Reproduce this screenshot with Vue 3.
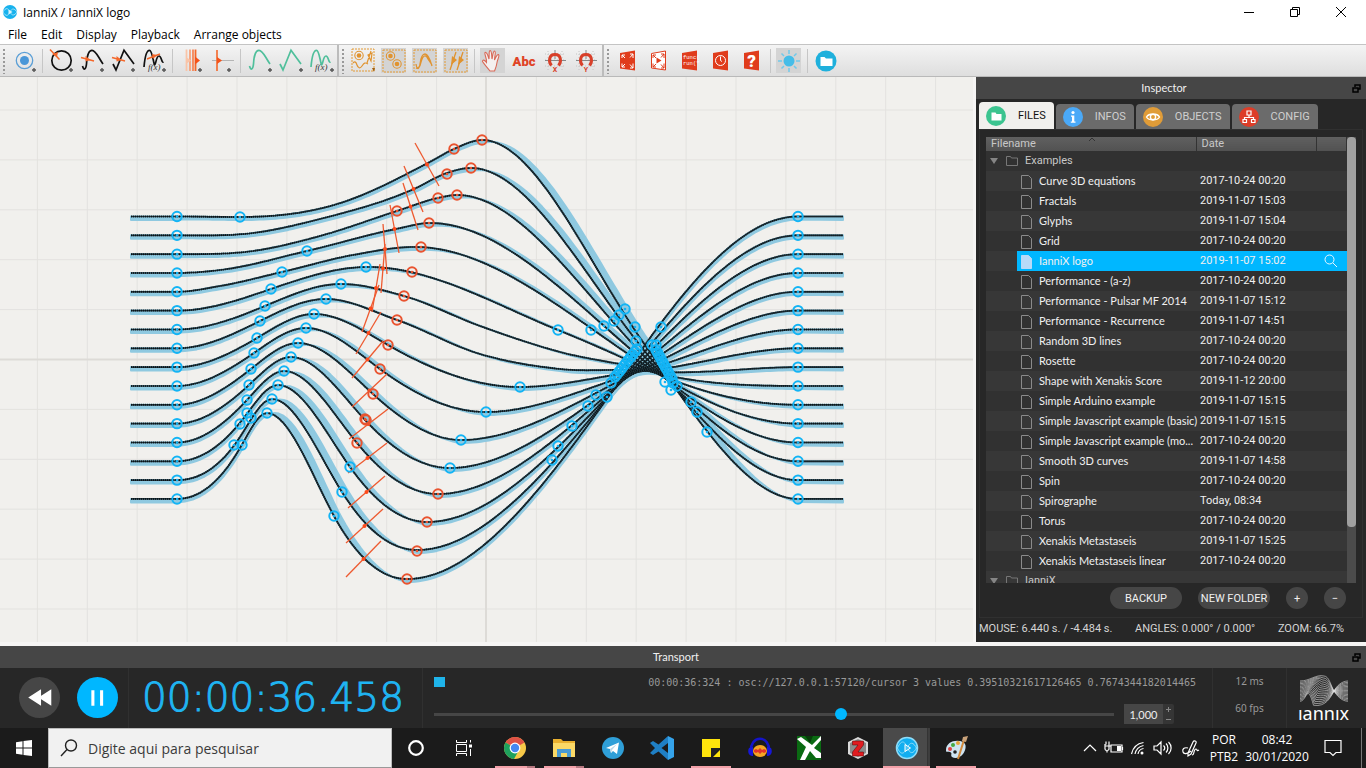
<script setup>
import { ref } from 'vue'

/* ---------- toolbar ---------- */
const plus = (x, y) => `<path d="M${x - 2} ${y}h4M${x} ${y - 2}v4" stroke="#555" stroke-width="1.4"/>`
const bump = 'M5.5 20C7 25.500 9 23 9.500 18C10 8 12 4.300 15 4.300C19 4.300 21 11 26 18'
const peak = 'M5 18L8 24L16 4.300L26 18'
const double = 'M5 21C6 9 8 4.300 10.500 4.300C13 4.300 13.500 12 15.500 19C17 19 17 10 20 10C22.500 10 22.500 17 24.500 16'
const fx = '<text x="9" y="24" font-size="9" font-style="italic" font-family="Liberation Serif, serif" fill="#333">f(x)</text>'
const line = (d, c) => `<path d="${d}" fill="none" stroke="${c}" stroke-width="1.7"/>`
const cursor = '<path d="M4 11.500L17 15" stroke="#f4672a" stroke-width="1.600"/><path d="M8.500 10l5 4-5 1.500z" fill="#f4672a"/>'
const frame = '<rect x="4" y="4" width="22" height="22" fill="none" stroke="#e39a35" stroke-width="1" stroke-dasharray="2 1"/>'
const dot = (x, y) => `<circle cx="${x}" cy="${y}" r="4.200" fill="none" stroke="#e0932f" stroke-width="1.100"/><circle cx="${x}" cy="${y}" r="2.300" fill="#e0932f"/>`
const magnet = (l) => `<path d="M5 8h20M5 14h20M5 20h20M8 5v20M22 5v20" stroke="#c4c4c4" stroke-width="1" stroke-dasharray="1 2"/><path d="M5 14.500h21M15 4v9" stroke="#888"/><path d="M11.500 19.500C8.500 16 8.500 8.500 15 8.500s6.500 7.500 3.500 11" fill="none" stroke="#d8402a" stroke-width="3"/><text x="15" y="25.500" text-anchor="middle" font-size="7" font-weight="bold" font-family="Roboto, sans-serif" fill="#d8402a">${l}</text>`
const panel = (inner) => `<path d="M7 7L22 4.500V24.500L7 22.500z" fill="#e03c1c"/>${inner}`
const expand = (c) => `<path d="M9 12V9h3M9 9l3 3M20 12V8h-3M20 8l-3 3.500M9 17.500V21h3M9 21l3-3M20 17.500V22h-3M20 22l-3-3.500" stroke="${c}" fill="none"/>`

const groups = [
  [
    { n: 'Add trigger', s: `<circle cx="15.500" cy="14.500" r="8.200" fill="none" stroke="#5b9fd6" stroke-width="1.300"/><circle cx="15.500" cy="14.500" r="4.500" fill="#4a97d8"/>${plus(25, 24)}` },
    null,
    { n: 'Circle curve', s: `<circle cx="15.500" cy="14.500" r="9.700" fill="none" stroke="#111" stroke-width="1.700"/><path d="M4 3.500L13.500 13.500" stroke="#f4672a" stroke-width="1.500"/><path d="M6 8l6-2-1 5z" fill="#f4672a"/>${plus(25, 24)}` },
    { n: 'Smooth curve', s: line(bump, '#111') + cursor + plus(25, 24) },
    { n: 'Straight curve', s: line(peak, '#111') + cursor + plus(25, 24) },
    { n: 'Equation curve', s: line(double, '#111') + '<path d="M8 13L21 8" stroke="#f4672a" stroke-width="1.500"/><path d="M13 8l5 1-4 4z" fill="#f4672a"/>' + fx + plus(25, 24) },
    null,
    { n: 'Timeline', s: `<path d="M10.500 3.500V25" stroke="#f9c4a8" stroke-width="1.800"/><path d="M14 3.500V25" stroke="#f7a27c" stroke-width="1.800"/><path d="M17 3.500V25" stroke="#f58657" stroke-width="1.800"/><path d="M19.500 3.500V25" stroke="#f4672a" stroke-width="1.800"/><path d="M19 10.500L24 14.500L19 18.500z" fill="#f4531a"/><path d="M10 11l5 3.500-5 3.500z" fill="#f9c4a8"/>${plus(24, 24)}` },
    { n: 'Cursor', s: `<path d="M5 14.500H27" stroke="#b5b5b5"/><path d="M10 4V25" stroke="#f4672a" stroke-width="1.600"/><path d="M10 11l5 3.500-5 3.500z" fill="#f4531a"/>${plus(22, 24)}` },
    null,
    { n: 'Smooth path', s: line(bump, '#4fbf9b') + plus(26, 24) },
    { n: 'Straight path', s: line(peak, '#4fbf9b') + plus(26, 24) },
    { n: 'Equation path', s: line(double, '#4fbf9b') + fx + plus(26, 24) }
  ],
  [
    { n: 'Show all', s: `<rect x="4" y="3" width="22" height="22" fill="none" stroke="#e39a35" stroke-dasharray="2 1"/>${dot(11, 9.5)}<path d="M5 17c2-2 3-1 4 2s3 4 5 1 3-4 6-2M19 17L23 5M20 9l4-2-1 8z" fill="none" stroke="#e0932f" stroke-width="1.200"/><path d="M24 22h3l-1 4z" fill="#a06010"/>` },
    { n: 'Show triggers', on: 1, s: frame + dot(11.5, 10) + dot(18, 18) },
    { n: 'Show curves', on: 1, s: frame + '<path d="M6 18c1 6 3 6 4 0 1-8 3-10 5-10s5 5 7 12M6 22c2 1 4-1 5-6 2-7 5-8 7-3l4 6" fill="none" stroke="#e0932f" stroke-width="1.300"/>' },
    { n: 'Show cursors', on: 1, s: frame + '<path d="M9 24L15 6M16 24L22 6" stroke="#e0932f" stroke-width="1.300"/><path d="M11 10l5 4-6 5zM18 10l5 4-6 5z" fill="#e0932f"/>' },
    null,
    { n: 'Move view', on: 1, s: '<path d="M12 25C9 21 6 18 4.500 15.500c0-2 2-2 4 1C9 12 6 8 7 6.500c1.500-1 3 3 4 6.500.500-4-.500-8 1-8.500 2 0 1.500 5 2 8.500 1-4 1-8 2.500-8 2 .500 0 5 0 9 1.500-3 2.500-6 4-5.500 1.500 1-1 5-1.500 8-.500 4-1 5-2.500 8.500z" fill="#f4f0ef" stroke="#d96a58" stroke-width="1.100"/>' },
    { n: 'Show labels', s: '<text x="15" y="19.500" text-anchor="middle" font-size="13" font-weight="900" font-family="Roboto, sans-serif" fill="#df4326">Abc</text>' },
    { n: 'Snap X', s: magnet('X') },
    { n: 'Snap Y', s: magnet('Y') }
  ],
  [
    { n: 'Fit window', s: panel(expand('#fff')) },
    { n: 'Full screen', s: '<path d="M7.500 7.500L21.500 5V24L7.500 22z" fill="#fff" stroke="#e03c1c"/><path d="M12.500 11.500l5 3-5 3z" fill="#e03c1c"/>' + expand('#e03c1c') },
    { n: 'Functions', s: panel('<g font-size="5.500" font-family="Liberation Mono, monospace" fill="#fff"><text x="8" y="13">func(</text><text x="8" y="19">run("</text></g>') },
    { n: 'Timing', s: panel('<circle cx="14.500" cy="14.500" r="5" fill="none" stroke="#fff"/><path d="M14.500 10.500v4l1.500 1" stroke="#fff" fill="none"/>') },
    { n: 'Help', s: panel('<text x="14.500" y="20.500" text-anchor="middle" font-size="17" font-weight="900" font-family="Roboto, sans-serif" fill="#fff">?</text>') },
    null,
    { n: 'Light theme', on: 1, s: '<circle cx="15" cy="15" r="5.500" fill="#45bde8"/><path d="M15 4v4M15 22v4M4 15h4M22 15h4M7.500 7.500l2.500 2.500M20 20l2.500 2.500M22.500 7.500L20 10M10 20l-2.500 2.500" stroke="#72c9ea" stroke-width="1.500"/>' },
    null,
    { n: 'Open project', s: '<circle cx="15" cy="15" r="10.500" fill="#1fb0dc"/><path d="M9.500 11h4l1.500 1.500h6.500V20h-12z" fill="#fff"/>' }
  ]
]

/* ---------- score ---------- */
const startY = (i) => 216.5 + 18.83 * i
/* [x, y, flat?] knots of every string, between the two straight ends */
const rise = [
  [[240, 217, 1], [334, 205], [428, 163], [454, 149], [482, 140, 1]],
  [[253, 233], [320, 219], [414, 189], [447, 173], [471, 168, 1]],
  [[253, 251], [320, 236], [397, 211], [438, 198], [457, 195, 1]],
  [[220, 270], [307, 251], [396, 229], [430, 223, 1]],
  [[220, 286], [282, 272], [353, 255], [415, 247, 1]],
  [[271, 289], [368, 267, 1]],
  [[265, 306], [341, 284, 1], [404, 296]],
  [[260, 321], [326, 299, 1], [397, 320]],
  [[257, 338], [314, 314, 1], [388, 345], [520, 387, 1]],
  [[254, 353], [306, 328, 1], [380, 369], [486, 412, 1]],
  [[251, 369], [298, 343, 1], [373, 394], [461, 440, 1]],
  [[249, 385], [291, 357, 1], [366, 421], [450, 468, 1]],
  [[247, 400], [284, 371, 1], [357, 443], [438, 494, 1]],
  [[243, 419], [278, 385, 1], [350, 467], [427, 522, 1]],
  [[240, 437], [272, 399, 1], [342, 492], [417, 550, 1]],
  [[240, 448], [267, 413, 1], [334, 516], [407, 579, 1]]
]
const middle = { 5: [[558, 330]], 6: [[480, 326], [560, 352]], 7: [[480, 354], [560, 369]] }

function build(i) {
  const t = (i - 7.5) / 7.5
  const r = 15 - i
  const pts = [
    [177, startY(i), 1], ...rise[i], ...(middle[i] || []),
    [645, 371 - 26 * t * t, 0, -1.4 * t],
    [798, startY(r), 1]
  ]
  const m = pts.map((p, k) => {
    if (p[2]) return 0
    if (p[3] !== undefined) return p[3]
    const a = pts[k - 1], b = pts[k + 1]
    const h1 = p[0] - a[0], h2 = b[0] - p[0]
    const s1 = (p[1] - a[1]) / h1, s2 = (b[1] - p[1]) / h2
    /* steeper tangent between two flat neighbours keeps the swing round */
    if (a[2] && b[2]) return 1.5 * (s1 * h2 + s2 * h1) / (h1 + h2)
    return (s1 * h2 + s2 * h1) / (h1 + h2)
  })
  const main = [[131, startY(i)], [177, startY(i)]]
  const edge = [[131, startY(i) + 3.5], [177, startY(i) + 3.5]]
  for (let k = 0; k < pts.length - 1; k++) {
    const [x0, y0] = pts[k], [x1, y1] = pts[k + 1], h = x1 - x0
    const n = Math.ceil(h / 4)
    for (let j = 1; j <= n; j++) {
      const u = j / n
      const y = (2 * u ** 3 - 3 * u ** 2 + 1) * y0 + (u ** 3 - 2 * u ** 2 + u) * h * m[k] +
        (3 * u ** 2 - 2 * u ** 3) * y1 + (u ** 3 - u ** 2) * h * m[k + 1]
      const slope = ((6 * u * u - 6 * u) * y0 + (6 * u - 6 * u * u) * y1) / h + (3 * u * u - 4 * u + 1) * m[k] + (3 * u * u - 2 * u) * m[k + 1]
      main.push([x0 + h * u, y])
      edge.push([x0 + h * u, y + 3 + Math.max(0, -slope) - 9 * Math.max(0, slope)])
    }
  }
  main.push([843, startY(r)])
  edge.push([843, startY(r) + 3.5])
  const str = (a) => a.map((p) => p[0].toFixed(1) + ' ' + p[1].toFixed(1)).join('L')
  return { line: 'M' + str(main), band: 'M' + str(main) + 'L' + str(edge.reverse()) + 'Z' }
}
const strings = Array.from({ length: 16 }, (_, i) => build(i))

const blue = [
  ...Array.from({ length: 16 }, (_, i) => [177, startY(i)]),
  ...Array.from({ length: 16 }, (_, i) => [798, startY(i)]),
  [240, 217], [307, 251], [282, 272], [271, 289], [265, 306], [260, 321], [257, 338], [254, 353], [251, 369], [249, 385],
  [247, 400], [247, 413], [251, 418], [240, 424], [234, 445], [242, 445],
  [366, 267], [341, 284], [326, 299], [314, 314], [306, 328], [298, 343], [291, 357], [284, 371], [278, 385], [272, 399], [267, 413],
  [350, 467], [342, 492], [334, 516], [450, 468], [461, 440], [486, 412], [520, 387],
  [558, 330], [591, 330], [604, 326], [614, 321], [619, 315], [625, 309], [635, 327], [636, 341],
  ...Array.from({ length: 11 }, (_, k) => [637 - 2.2 * k, 349 + 2.8 * k]),
  [611, 383], [596, 395], [607, 397], [588, 406], [572, 426], [558, 446], [552, 460],
  [661, 327], [652, 345], [656, 345],
  ...Array.from({ length: 11 }, (_, k) => [656 + 1.6 * k, 350 + 2.9 * k]),
  [665, 382], [671, 390], [677, 386], [673, 383], [691, 402], [697, 412], [707, 432]
]
const orange = [
  [482, 140], [454, 149], [471, 168], [447, 174], [457, 195], [438, 198], [397, 211], [429, 223], [421, 247],
  [412, 272], [404, 296], [397, 320], [388, 345], [380, 369], [373, 394], [365, 419], [366, 420], [357, 443],
  [438, 494], [427, 522], [417, 551], [407, 579]
]
const cursors = [
  [415, 143, 439, 186], [404, 166, 423, 212], [403, 183, 418, 230], [390, 205, 399, 253],
  [383, 224, 387, 274], [385, 244, 381, 293], [380, 264, 372, 312], [379, 285, 362, 332],
  [381, 312, 356, 354], [383, 341, 352, 378], [387, 374, 352, 407], [388, 409, 349, 439],
  [387, 443, 348, 473], [385, 476, 348, 508], [383, 509, 346, 543], [381, 541, 346, 577]
]
const gridX = Array.from({ length: 20 }, (_, k) => 486.5 + 49.9 * (k - 9)).filter((x) => x < 972)
const gridY = Array.from({ length: 11 }, (_, k) => 359.5 + 49.9 * (k - 5))

/* ---------- inspector ---------- */
const tabs = [
  { n: 'FILES', c: '#3cc48f', s: '<path d="M5.500 6.500h4l1 1.500h5v6.500h-10z" fill="#fff"/>' },
  { n: 'INFOS', c: '#4aa9f8', s: '<circle cx="10" cy="5.500" r="1.600" fill="#fff"/><path d="M8 8.500h3.300v6h1.200v1.300H7.800v-1.300h1.200V9.800H8z" fill="#fff"/>' },
  { n: 'OBJECTS', c: '#e09c38', s: '<path d="M3.500 10C6 6 14 6 16.500 10C14 14 6 14 3.500 10z" fill="none" stroke="#fff" stroke-width="1.400"/><circle cx="10" cy="10" r="2.600" fill="none" stroke="#fff" stroke-width="1.300"/>' },
  { n: 'CONFIG', c: '#dd3d28', s: '<path d="M8 4h4v4H8zM4 12.500h3.500v3H4zM12.500 12.500H16v3h-3.500zM10 8v2.500M5.500 12.500v-2h9v2" fill="none" stroke="#fff" stroke-width="1.200"/>' }
]
const files = [
  ['Curve 3D equations', '2017-10-24 00:20'], ['Fractals', '2019-11-07 15:03'], ['Glyphs', '2019-11-07 15:04'],
  ['Grid', '2017-10-24 00:20'], ['IanniX logo', '2019-11-07 15:02'], ['Performance - (a-z)', '2017-10-24 00:20'],
  ['Performance - Pulsar MF 2014', '2019-11-07 15:12'], ['Performance - Recurrence', '2019-11-07 14:51'],
  ['Random 3D lines', '2017-10-24 00:20'], ['Rosette', '2017-10-24 00:20'], ['Shape with Xenakis Score', '2019-11-12 20:00'],
  ['Simple Arduino example', '2019-11-07 15:15'], ['Simple Javascript example (basic)', '2019-11-07 15:15'],
  ['Simple Javascript example (mo...', '2017-10-24 00:20'], ['Smooth 3D curves', '2019-11-07 14:58'],
  ['Spin', '2017-10-24 00:20'], ['Spirographe', 'Today, 08:34'], ['Torus', '2017-10-24 00:20'],
  ['Xenakis Metastaseis', '2019-11-07 15:25'], ['Xenakis Metastaseis linear', '2017-10-24 00:20']
]
const selected = ref(4)
const position = ref(60)
const speed = ref('1,000')

/* ---------- logo of the transport bar ---------- */
const logoLines = Array.from({ length: 16 }, (_, i) => {
  const y = 5 + i * 1.35
  const e = 25.25 - i * 1.35
  return `M0 ${y}C${10 - i * 0.2} ${y} ${16 - i * 0.6} ${-2 + i * 0.5} ${24 - i * 0.7} ${i * 1.95}C${29 - i * 0.2} ${i * 2.1} 31 ${10 + i * 0.7} 34 15S42 ${e} 48 ${e}`
}).join('')

/* ---------- taskbar ---------- */
const apps = [
  { n: 'Chrome', run: 2, s: '<circle cx="12" cy="12" r="11" fill="#f7c948"/><path d="M12 12L2.500 6.500A11 11 0 0 1 21.500 6.500z" fill="#de5246"/><path d="M12 12L2.500 6.500A11 11 0 0 0 11 23L16 14z" fill="#1fa15d"/><path d="M12 6.500h9.500L12 8z" fill="#de5246"/><circle cx="12" cy="12" r="5.400" fill="#fff"/><circle cx="12" cy="12" r="4.200" fill="#4688f1"/>' },
  { n: 'Explorer', run: 2, s: '<path d="M1 3h8l2 2h12v16H1z" fill="#e9b02f"/><path d="M1 7h22v14H1z" fill="#fbd966"/><path d="M5 21v-8h14v8h-4v-4H9v4z" fill="#4a9bd4"/>' },
  { n: 'Telegram', s: '<circle cx="12" cy="12" r="11" fill="#2f9fd8"/><path d="M5 12L18 6.500L16 18l-4-3-2 2-1-4z" fill="#fff"/><path d="M9 13l7-5-5 6-1 3z" fill="#bcd9ea"/>' },
  { n: 'Code', s: '<path d="M18 0l-9.500 8.500L3 5 0 7l5 5-5 5 3 2 5.500-3.500L18 24z" fill="#1f7fc4"/><path d="M18 0L24 3v18l-6 3z" fill="#35a3ea"/><path d="M18 7v10L11.500 12z" fill="#1b1b1b"/>' },
  { n: 'Notes', run: 1, s: '<path d="M3 3h18v9h-9v9H3z" fill="#ffe40c"/><path d="M12 12h9l-9 9z" fill="#222"/><path d="M21 14v7h-7z" fill="#ffe40c"/>' },
  { n: 'Audacity', s: '<ellipse cx="12" cy="15" rx="7" ry="6" fill="#f5a623"/><path d="M6 14l2-1 2 1 2-2 2 2 2-1 2 1v2l-2 1-2-1-2 2-2-2-2 1-2-1z" fill="#e3342b"/><path d="M3 17C1 -2 23 -2 21 17" fill="none" stroke="#1414c8" stroke-width="2.600"/><path d="M1 12c-2 4 0 8 4 8V11zM23 12c2 4 0 8-4 8V11z" fill="#1717d8"/>' },
  { n: 'Xcas', s: '<path d="M0 0h24v24H0z" fill="#0a6a12"/><path d="M0 3l9 8L3 24h5l5-9 6 7h5v-5l-7-5 7-8V0l-9 9L4 1z" fill="#fff"/><path d="M8 0h8l-3 7z" fill="#063c09"/>' },
  { n: 'Zotero', s: '<path d="M12 1l10 5v12l-10 5-10-5V6z" fill="#dadada"/><path d="M12 3l8 4v10l-8 4-8-4V7z" fill="#8b8b8b"/><path d="M6.500 5h11v4l-5.500 7h5.500v4h-11v-4L12 9H6.500z" fill="#e01c20" stroke="#500" stroke-width=".500"/>' },
  { n: 'IanniX', run: 2, on: 1, s: '<circle cx="12" cy="12" r="10.500" fill="#11aef0" stroke="#8edcf8" stroke-width="1.500"/><path d="M2 13C6 4 9 4 12 11s6 8 10 0M2 11c4 9 7 7 10 1s6-7 10 1" fill="none" stroke="#8edcf8" stroke-width="1"/><path d="M10 8.500l5.500 3.500-5.500 3.500z" fill="#4bc4f4" stroke="#fff"/>' },
  { n: 'Paint', run: 1, s: '<path d="M2 14C2 6 12 3 19 6c4 2 3 8 0 12s-8 5-11 3c-2-2 1-4-2-5s-4 1-4-2z" fill="#cfe4f2"/><circle cx="6" cy="13" r="2" fill="#d44"/><circle cx="9" cy="9" r="2" fill="#4a4"/><circle cx="14" cy="7" r="2" fill="#e8a33a"/><circle cx="11" cy="16" r="1.800" fill="#222"/><path d="M14 23L20 4" stroke="#d28a3c" stroke-width="2"/><path d="M18 5l1-4 5-1-2 6z" fill="#c9a27a"/>' }
]
</script>

<template>
  <div class="desktop">
    <header class="titlebar">
      <svg class="app-icon" viewBox="0 0 16 16"><circle cx="8" cy="8" r="7" fill="#17b2ee" /><path d="M1 8C4 3 6 4 8 8s4 4 7 0M1 8c3 5 5 4 7 0s4-4 7 0" fill="none" stroke="#9be0f8" /><path d="M6.500 5.500l4 2.500-4 2.500z" fill="#d8f4fd" /></svg>
      <h1>IanniX / IanniX logo</h1>
      <div class="window-buttons">
        <button aria-label="Minimize"><svg viewBox="0 0 12 12"><path d="M1 6.500h10" /></svg></button>
        <button aria-label="Restore"><svg viewBox="0 0 12 12"><path d="M1.500 3.500h7v7h-7zM3.500 3.500v-2h7v7h-2" /></svg></button>
        <button aria-label="Close"><svg viewBox="0 0 12 12"><path d="M1 1l10 10M11 1L1 11" /></svg></button>
      </div>
    </header>

    <nav class="menubar">
      <button v-for="m in ['File', 'Edit', 'Display', 'Playback', 'Arrange objects']" :key="m">{{ m }}</button>
    </nav>

    <div class="toolbar">
      <div v-for="(g, gi) in groups" :key="gi" class="tool-group">
        <span class="grip"></span>
        <template v-for="(t, ti) in g" :key="ti">
          <button v-if="t" class="tool" :class="{ on: t.on }" :aria-label="t.n"><svg viewBox="0 0 30 30" v-html="t.s"></svg></button>
          <span v-else class="tool-sep"></span>
        </template>
      </div>
    </div>

    <main class="workspace">
      <section class="score">
        <svg class="canvas" aria-label="Score">
          <g transform="translate(0 -77)">
            <g class="grid">
              <line v-for="x in gridX" :key="'x' + x" :x1="x" :x2="x" y1="77" y2="643" />
              <line v-for="y in gridY" :key="'y' + y" x1="0" x2="973" :y1="y" :y2="y" />
              <path class="axis" d="M486 77V643M0 359.500H973" />
            </g>
            <path v-for="(s, i) in strings" :key="'b' + i" class="band" :d="s.band" />
            <g v-for="(s, i) in strings" :key="'l' + i">
              <path class="string" :d="s.line" />
              <path class="stipple" :d="s.line" />
            </g>
            <g v-for="(c, i) in cursors" :key="'c' + i" class="cursor">
              <line :x1="c[0]" :y1="c[1]" :x2="c[2]" :y2="c[3]" />
              <circle :cx="(c[0] + c[2]) / 2" :cy="(c[1] + c[3]) / 2" r="2" />
            </g>
            <g v-for="(p, i) in blue" :key="'p' + i" class="node">
              <circle :cx="p[0]" :cy="p[1]" r="4.700" /><circle :cx="p[0]" :cy="p[1]" r="1.300" />
            </g>
            <g v-for="(p, i) in orange" :key="'o' + i" class="node hot">
              <circle :cx="p[0]" :cy="p[1]" r="4.700" /><circle :cx="p[0]" :cy="p[1]" r="1.300" />
            </g>
          </g>
        </svg>
      </section>

      <aside class="inspector">
        <h2 class="dock-title">Inspector<svg class="float" viewBox="0 0 9 9"><path d="M3 3V1h5v4H6M1 4h5v4H1z" /></svg></h2>
        <div class="tabs">
          <button v-for="(t, i) in tabs" :key="t.n" class="tab" :class="{ current: i === 0 }">
            <svg viewBox="0 0 20 20"><circle cx="10" cy="10" r="10" :fill="t.c" /><g v-html="t.s"></g></svg><span>{{ t.n }}</span>
          </button>
        </div>
        <div class="tab-page">
          <div class="list">
            <div class="list-view">
              <table>
                <colgroup><col class="c-name" /><col class="c-date" /><col /></colgroup>
                <thead>
                  <tr>
                    <th>Filename<svg class="sort" viewBox="0 0 8 4"><path d="M1 4l3-3 3 3" /></svg></th>
                    <th>Date</th>
                    <th></th>
                  </tr>
                </thead>
                <tbody>
                  <tr class="folder">
                    <td><svg class="tri" viewBox="0 0 8 6"><path d="M0 0h8L4 6z" /></svg><svg class="dir" viewBox="0 0 12 10"><path d="M.5 9.500v-9h4l1 1.500h6v7.500z" /></svg>Examples</td><td></td><td></td>
                  </tr>
                  <tr v-for="(f, i) in files" :key="f[0]" :class="{ selected: i === selected }" @click="selected = i">
                    <td class="file"><svg class="doc" viewBox="0 0 11 14"><path d="M.5.500h7l3 3v10H.500z" /></svg>{{ f[0] }}</td>
                    <td>{{ f[1] }}</td>
                    <td class="act"><svg v-if="i === selected" class="lens" viewBox="0 0 14 14"><circle cx="5.500" cy="5.500" r="4.500" /><path d="M9 9l4 4" /></svg></td>
                  </tr>
                  <tr class="folder">
                    <td><svg class="tri" viewBox="0 0 8 6"><path d="M0 0h8L4 6z" /></svg><svg class="dir" viewBox="0 0 12 10"><path d="M.5 9.500v-9h4l1 1.500h6v7.500z" /></svg>IanniX</td><td></td><td></td>
                  </tr>
                </tbody>
              </table>
            </div>
            <div class="scrollbar"><div class="thumb"></div></div>
          </div>
          <div class="file-actions">
            <button class="wide">BACKUP</button>
            <button class="wide">NEW FOLDER</button>
            <button class="round">+</button>
            <button class="round">−</button>
          </div>
        </div>
        <div class="status"><span>MOUSE: 6.440 s. / -4.484 s.</span><span>ANGLES: 0.000° / 0.000°</span><span>ZOOM: 66.7%</span></div>
      </aside>
    </main>

    <section class="transport">
      <h2 class="dock-title">Transport<svg class="float" viewBox="0 0 9 9"><path d="M3 3V1h5v4H6M1 4h5v4H1z" /></svg></h2>
      <div class="transport-body">
        <div class="play">
          <button aria-label="Rewind"><svg viewBox="0 0 40 40"><path d="M9 20l12.500-8v16zM19 20l12.500-8v16z" /></svg></button>
          <button class="active" aria-label="Pause"><svg viewBox="0 0 40 40"><path d="M14 13h3v15h-3zM22.500 13h3v15h-3z" /></svg></button>
        </div>
        <div class="clock">00:00:36.458</div>
        <div class="progress">
          <div class="message"><i></i><span>00:00:36:324 : osc://127.0.0.1:57120/cursor 3 values 0.39510321617126465 0.7674344182014465</span></div>
          <div class="scrub">
            <input v-model="position" type="range" min="0" max="100" aria-label="Position" />
            <div class="spin">
              <input v-model="speed" type="text" aria-label="Speed" />
              <div>
                <button aria-label="Increase"><svg viewBox="0 0 7 7"><path d="M1 3.500h5M3.500 1v5" /></svg></button>
                <button aria-label="Decrease"><svg viewBox="0 0 7 7"><path d="M1 3.500h5" /></svg></button>
              </div>
            </div>
          </div>
        </div>
        <div class="stats"><span>12 ms</span><span>60 fps</span></div>
        <div class="brand"><svg viewBox="0 0 48 31"><path :d="logoLines" /></svg><span>ıannıx</span></div>
      </div>
    </section>

    <footer class="taskbar">
      <button class="start" aria-label="Start"><svg viewBox="0 0 16 16"><path d="M0 2.300L6.500 1.300V7.500H0zM7.500 1.100L16 0v7.500H7.500zM0 8.500h6.500v6.200L0 13.800zM7.500 8.500H16V16l-8.500-1.100z" /></svg></button>
      <label class="search">
        <svg viewBox="0 0 18 18"><circle cx="11" cy="6.500" r="5.500" /><path d="M7 10.500L1 17" /></svg>
        <input type="text" placeholder="Digite aqui para pesquisar" aria-label="Digite aqui para pesquisar" />
      </label>
      <button class="sys" aria-label="Cortana"><svg viewBox="0 0 16 16"><circle cx="8" cy="8" r="6.800" stroke-width="2.200" /></svg></button>
      <button class="sys" aria-label="Task view"><svg viewBox="0 0 16 16"><path d="M.5 0v2.500h10V0M.500 16v-2.500h10V16M.500 4.500h10v7H.500zM14.500 0v2.500M14.500 9v7" /><path d="M13 4.500h3v3h-3z" fill="#fff" stroke="none" /></svg></button>
      <div class="apps">
        <button v-for="a in apps" :key="a.n" :class="{ on: a.on, run: a.run, many: a.run === 2 }" :aria-label="a.n"><svg viewBox="0 0 24 24" v-html="a.s"></svg></button>
      </div>
      <div class="tray">
        <svg viewBox="0 0 24 20"><path d="M6 13l6-6 6 6" /></svg>
        <svg viewBox="0 0 24 20"><path d="M9 7h11v7H9zM20.500 9v3M3 8h6M3 6v5c0 2 4 2 4 0V6M5 12v2.500M4 3.500v3M7 3.500v3" /><path d="M15 8h4v5h-4z" fill="#fff" stroke="none" /></svg>
        <svg viewBox="0 0 24 20"><path d="M5.500 16C7 9 11 5.500 17.500 4.500M9 16c1-5 4-7.500 8.500-8.500M12 16c.500-3 2.500-5 5.500-5.500" /><circle cx="16" cy="15" r="1.500" fill="#fff" stroke="none" /></svg>
        <svg viewBox="0 0 24 20"><path d="M4 8h3l4-4v12l-4-4H4zM13.500 7.500c1.500 1.500 1.500 3.500 0 5M16 5.500c2.500 2.500 2.500 6.500 0 9M18.500 4c3.500 3.500 3.500 8.500 0 12" /></svg>
        <svg class="pen" viewBox="0 0 24 20"><path d="M9 10c-4-1-6 1-5 4s6 1 8-1M9 15L14 4c1-2 4-1 3 1l-5 11-3 2zM13 17c3 0 1-6 4-6 2 0 0 3 3 1" /></svg>
        <span class="two lang">POR<br />PTB2</span>
        <span class="two date">08:42<br />30/01/2020</span>
        <svg class="note" viewBox="0 0 20 20"><path d="M2 2.500h16v12h-5l-3 3-3-3H2z" /></svg>
        <i class="peek"></i>
      </div>
    </footer>
  </div>
</template>

<style>
html, body { margin: 0; background: #f1f0ed; }
</style>

<style scoped>
* { box-sizing: border-box; }
button, input { font: inherit; color: inherit; border: 0; padding: 0; margin: 0; background: none; }
h1, h2 { margin: 0; font-weight: 400; }
svg { display: block; }
.desktop { display: flex; flex-direction: column; min-height: 100vh; font-family: "Noto Sans", sans-serif; font-size: 12px; color: #000; }

.titlebar { display: flex; align-items: center; height: 24px; background: #fff; padding: 0 2px; }
.app-icon { width: 16px; height: 16px; }
.titlebar h1 { font-family: "Open Sans", sans-serif; font-size: 12px; margin-left: 5px; flex: 1; }
.window-buttons { display: flex; }
.window-buttons button { width: 46px; height: 22px; display: grid; place-items: center; }
.window-buttons svg { width: 12px; height: 12px; fill: none; stroke: #000; }
.menubar { display: flex; height: 20px; gap: 14px; padding-left: 8px; background: #fff; font-family: "Open Sans", sans-serif; font-size: 12px; }

.toolbar { display: flex; height: 33px; background: linear-gradient(#f4f4f4, #dedede); border-top: 1px solid #c4c4c4; border-bottom: 1px solid #b9b9b9; }
.tool-group { display: flex; align-items: center; padding-right: 1px; border-right: 2px solid #bcbcbc; }
.tool-group:last-child { border: 0; }
.grip { width: 8px; height: 26px; background: radial-gradient(circle at 4px 2px, #999 1px, transparent 1px) 0 0 / 8px 4px; }
.tool { width: 31px; height: 31px; display: grid; place-items: center; }
.tool svg { width: 30px; height: 30px; }
.tool.on { background: linear-gradient(#d4d4d4, #d4d4d4) center / 25px 25px no-repeat; }
.tool-sep { width: 6px; height: 24px; background: linear-gradient(#c6c6c6, #c6c6c6) center / 1px 24px no-repeat; }

.workspace { flex: 1; display: flex; padding-bottom: 4px; background: #f6f5f4; }
.score { flex: 1; min-width: 0; background: #f1f0ed; border-right: 3px solid #f6f5f4; display: flex; }
.canvas { flex: 1; min-width: 0; height: auto; overflow: hidden; }
.grid line { stroke: #e3e2df; stroke-width: 1; }
.grid .axis { stroke: #dddbd7; stroke-width: 2; fill: none; }
.band { fill: #8fc9e0; stroke: #8fc9e0; stroke-width: 2; stroke-linejoin: round; }
.string { fill: none; stroke: #20363f; stroke-width: 1.7px; }
.stipple { fill: none; stroke: #000; stroke-width: 2; stroke-dasharray: 1 1; opacity: .65; }
.cursor line { stroke: #ee5a30; stroke-width: 1.3px; }
.cursor circle { fill: #ff4a1a; }
.node circle { fill: none; stroke: #12b4f5; stroke-width: 2px; }
.node circle + circle { fill: #12b4f5; stroke: none; }
.node.hot circle { stroke: #e9532f; }
.node.hot circle + circle { fill: #e9532f; stroke: none; }

.inspector { width: 390px; display: flex; flex-direction: column; background: #272727; color: #f0f0f0; font-family: Roboto, sans-serif; font-size: 11px; }
.dock-title { position: relative; height: 22px; line-height: 22px; text-align: center; background: #464646; color: #f0f0f0; font-family: Lato, sans-serif; font-size: 11px; padding-right: 14px; }
.float { position: absolute; right: 5px; top: 7px; width: 9px; height: 9px; fill: none; stroke: #000; stroke-width: 1.5px; }
.tabs { display: flex; align-items: flex-end; gap: 2px; height: 30px; padding-left: 3px; }
.tab { display: flex; align-items: center; height: 25px; background: #6b6b6b; color: #cfcfcf; border-radius: 4px 4px 0 0; padding: 0 8px 0 7px; gap: 12px; }
.tab.current { height: 27px; background: #f1f0ed; color: #111; }
.tab svg { width: 20px; height: 20px; }
.tab-page { flex: 1; display: flex; flex-direction: column; margin: 0 3px; padding: 7px 6px 0 6px; border: 1px solid #303030; }
.list { display: flex; height: 446px; background: #333; }
.list-view { flex: 1; height: 446px; overflow: hidden; }
.scrollbar { width: 9px; background: #4b4b4b; }
.thumb { height: 390px; background: #a0a0a0; border-radius: 4px; }
table { width: 100%; table-layout: fixed; border-collapse: collapse; }
.c-name { width: 210px; }
.c-date { width: 120px; }
th { position: relative; height: 14px; padding: 0 5px; text-align: left; font-weight: 400; line-height: 14px; color: #c8c8c8; background: linear-gradient(#606060, #525252); border-right: 1px solid #333; }
.sort { position: absolute; left: 102px; top: 0; width: 8px; height: 4px; fill: none; stroke: #333; }
td { height: 20px; line-height: 20px; padding: 0 0 0 4px; white-space: nowrap; }
tbody tr { background: #313131; }
tbody tr:nth-child(even) { background: #373737; }
td svg { display: inline-block; vertical-align: middle; }
.folder { color: #c8c8c8; }
.tri { width: 8px; height: 6px; fill: #858585; margin-right: 8px; }
.dir { width: 12px; height: 10px; fill: none; stroke: #777; margin-right: 7px; }
.file { padding-left: 35px; font-family: Lato, sans-serif; }
.act { padding-left: 8px; }
.doc { width: 11px; height: 14px; fill: none; stroke: #8a8a8a; margin-right: 7px; }
.selected td { background: #00b7ff; }
.selected .file { background: linear-gradient(to right, transparent 31px, #00b7ff 31px); }
.selected .doc { fill: #b7daf8; stroke: #b7daf8; }
.lens { width: 14px; height: 14px; fill: none; stroke: #eaf8ff; }
.file-actions { display: flex; justify-content: flex-end; gap: 16px; padding: 4px 10px 0 0; }
.file-actions button { height: 22px; border-radius: 11px; background: #464646; }
.wide { width: 72px; }
.round { width: 22px; }
.status { display: flex; justify-content: space-between; height: 24px; line-height: 21px; padding: 0 22px 0 3px; color: #d5d5d5; }

.transport { background: #272727; color: #999; }
.transport-body { display: flex; height: 60px; }
.transport-body > div + div { border-left: 1px solid #303030; }
.play { width: 128px; display: flex; align-items: center; padding: 0 0 2px 19px; gap: 17px; }
.play button { width: 41px; height: 41px; border-radius: 50%; background: #464646; }
.play .active { background: #00b7ff; }
.play svg { fill: #fff; }
.clock { width: 294px; padding-left: 13px; font-family: "DejaVu Sans", sans-serif; font-weight: 200; font-size: 39px; line-height: 60px; color: #1fb4f2; -webkit-text-stroke: 1px #1fb4f2; white-space: nowrap; }
.progress { flex: 1; min-width: 0; padding: 7px 16px 0 11px; }
.message { display: flex; justify-content: space-between; font: 10px/16px "DejaVu Sans Mono", monospace; height: 29px; white-space: nowrap; }
.message i { width: 11px; height: 10px; margin-top: 2px; background: #1fb4ea; }
.scrub { display: flex; align-items: center; gap: 10px; margin-right: 22px; }
.scrub > input { flex: 1; min-width: 0; appearance: none; height: 12px; background: linear-gradient(#464646, #464646) center / 100% 3px no-repeat; }
.scrub > input::-webkit-slider-thumb { appearance: none; width: 12px; height: 12px; border-radius: 50%; background: #00b7ff; }
.spin { display: flex; width: 50px; height: 20px; background: #353535; color: #eee; border-radius: 2px; }
.spin input { width: 39px; text-align: center; background: #464646; font-family: Lato, sans-serif; font-size: 11px; }
.spin div { flex: 1; display: flex; flex-direction: column; }
.spin button { height: 10px; display: grid; place-items: center; }
.spin svg { width: 7px; height: 7px; stroke: #888; }
.stats { width: 74px; display: flex; flex-direction: column; align-items: center; gap: 11px; padding-top: 5px; font-size: 10px; line-height: 16px; }
.brand { width: 80px; display: flex; flex-direction: column; align-items: center; padding: 8px 6px 0 0; color: #fff; }
.brand svg { width: 48px; height: 31px; fill: none; stroke: #ddd; stroke-width: .6px; overflow: visible; }
.brand span { font: 18px/12px "Noto Sans", sans-serif; }

.taskbar { display: flex; height: 40px; background: #1b1b1b; color: #fff; font-family: "Open Sans", sans-serif; }
.start { width: 48px; display: grid; place-items: center; }
.start svg { width: 16px; height: 16px; fill: #fff; }
.search { width: 344px; display: flex; align-items: center; gap: 10px; padding-left: 11px; background: #f1f1f1; border: 1px solid #bbb; border-bottom-color: #999; color: #333; }
.search svg { width: 18px; height: 18px; fill: none; stroke: #222; stroke-width: 1.4px; }
.search input { flex: 1; min-width: 0; font-size: 14px; outline: 0; }
.search input::placeholder { color: #3b3b3b; opacity: 1; }
.sys { width: 48px; display: grid; place-items: center; }
.sys svg { width: 16px; height: 16px; fill: none; stroke: #fff; }
.apps { display: flex; padding-left: 2px; }
.apps button { width: 49px; display: grid; place-items: center; }
.apps svg { width: 24px; height: 24px; }
.apps .run { background: linear-gradient(#f2a0a8, #f2a0a8) center bottom / 40px 2px no-repeat; }
.apps .many { background: linear-gradient(to right, #f2a0a8 32px, #b57880 32px) center bottom / 40px 2px no-repeat; }
.apps .on { background: linear-gradient(#f2a0a8, #f2a0a8) center bottom / 47px 2px no-repeat, linear-gradient(to right, #4a4a4a 44px, #2a2a2a 44px, #3e3e3e 45px) center / 47px 40px no-repeat; }
.tray { margin-left: auto; display: flex; align-items: center; }
.tray svg { width: 24px; height: 20px; fill: none; stroke: #fff; stroke-width: 1.2px; }
.tray .pen { margin-left: 5px; }
.two { text-align: center; font-size: 12px; line-height: 17px; }
.lang { width: 42px; }
.date { width: 64px; }
.tray .note { width: 20px; margin: 0 18px 0 14px; }
.peek { width: 5px; height: 40px; border-left: 1px solid #777; }
</style>
